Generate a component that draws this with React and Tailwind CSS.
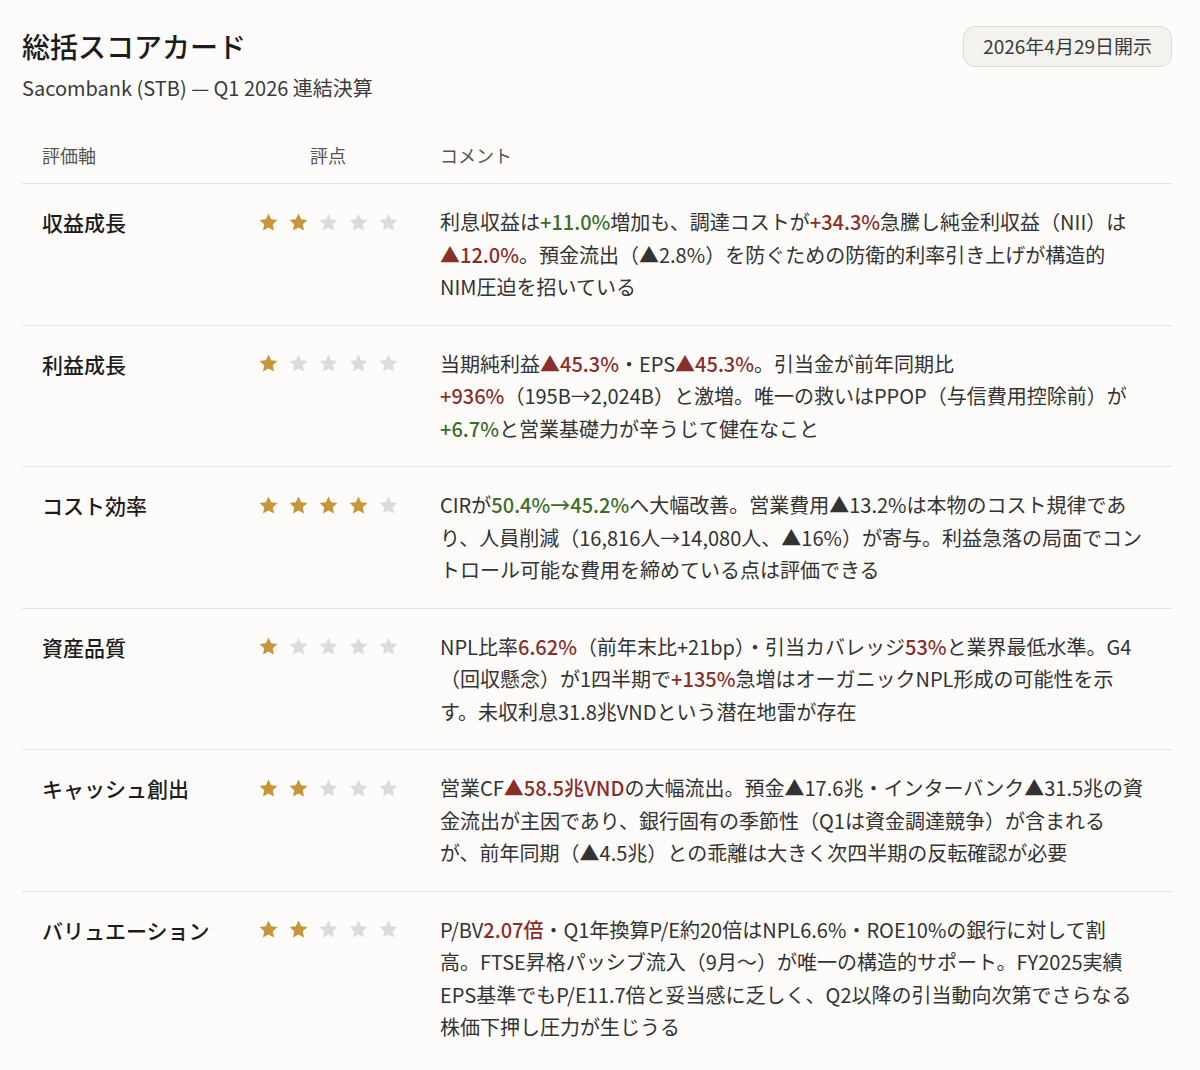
import React from "react";

const G = ({ children }) => <span className="text-[#3b6e2a] font-medium">{children}</span>;
const R = ({ children }) => <span className="text-[#8a2e2a] font-medium">{children}</span>;

function Star({ on }) {
  return (
    <svg width="21" height="21" viewBox="0 0 24 24" className="block">
      <path
        d="M12 1.8l3.05 6.55 7.15.85-5.3 4.9 1.42 7.08L12 17.6l-6.32 3.58 1.42-7.08-5.3-4.9 7.15-.85z"
        fill={on ? "#c8963a" : "#dcdcdc"}
      />
    </svg>
  );
}

function Stars({ n }) {
  return (
    <div className="flex items-center justify-center gap-[9px] h-[32.5px]">
      {[0, 1, 2, 3, 4].map((i) => (
        <Star key={i} on={i < n} />
      ))}
    </div>
  );
}

const rows = [
  {
    label: "収益成長",
    n: 2,
    body: (
      <>
        利息収益は<G>+11.0%</G>増加も、調達コストが<R>+34.3%</R>急騰し純金利収益（NII）は<br />
        <R>▲12.0%</R>。預金流出（▲2.8%）を防ぐための防衛的利率引き上げが構造的<br />
        NIM圧迫を招いている
      </>
    ),
  },
  {
    label: "利益成長",
    n: 1,
    body: (
      <>
        当期純利益<R>▲45.3%</R>・EPS<R>▲45.3%</R>。引当金が前年同期比<br />
        <R>+936%</R>（195B→2,024B）と激増。唯一の救いはPPOP（与信費用控除前）が<br />
        <G>+6.7%</G>と営業基礎力が辛うじて健在なこと
      </>
    ),
  },
  {
    label: "コスト効率",
    n: 4,
    body: (
      <>
        CIRが<G>50.4%→45.2%</G>へ大幅改善。営業費用▲13.2%は本物のコスト規律であ<br />
        り、人員削減（16,816人→14,080人、▲16%）が寄与。利益急落の局面でコン<br />
        トロール可能な費用を締めている点は評価できる
      </>
    ),
  },
  {
    label: "資産品質",
    n: 1,
    body: (
      <>
        NPL比率<R>6.62%</R>（前年末比+21bp）・引当カバレッジ<R>53%</R>と業界最低水準。G4<br />
        （回収懸念）が1四半期で<R>+135%</R>急増はオーガニックNPL形成の可能性を示<br />
        す。未収利息31.8兆VNDという潜在地雷が存在
      </>
    ),
  },
  {
    label: "キャッシュ創出",
    n: 2,
    body: (
      <>
        営業CF<R>▲58.5兆VND</R>の大幅流出。預金▲17.6兆・インターバンク▲31.5兆の資<br />
        金流出が主因であり、銀行固有の季節性（Q1は資金調達競争）が含まれる<br />
        が、前年同期（▲4.5兆）との乖離は大きく次四半期の反転確認が必要
      </>
    ),
  },
  {
    label: "バリュエーション",
    n: 2,
    body: (
      <>
        P/BV<R>2.07倍</R>・Q1年換算P/E約20倍はNPL6.6%・ROE10%の銀行に対して割<br />
        高。FTSE昇格パッシブ流入（9月〜）が唯一の構造的サポート。FY2025実績<br />
        EPS基準でもP/E11.7倍と妥当感に乏しく、Q2以降の引当動向次第でさらなる<br />
        株価下押し圧力が生じうる
      </>
    ),
  },
];

export default function App() {
  return (
    <div
      className="min-h-[1070px] bg-[#fdfcfa] pl-[22px] pr-[28px] pt-[26px] text-[#2e2e2e]"
      style={{ fontFamily: '"Noto Sans CJK JP", "Noto Sans", sans-serif' }}
    >
      <div className="flex items-start justify-between">
        <div>
          <h1 className="text-[28px] leading-[40px] font-medium text-[#1c1c1c]">総括スコアカード</h1>
          <p className="mt-[8px] text-[20px] leading-[28px] text-[#3a3a3a]">
            Sacombank (STB) — Q1 2026 連結決算
          </p>
        </div>
        <div className="h-[41px] px-[19px] flex items-center rounded-[12px] border border-[#dedbd5] bg-[#f3f2ee] text-[19px] text-[#3a3a3a]">
          2026年4月29日開示
        </div>
      </div>

      <div className="mt-[26px]">
        <div className="grid grid-cols-[214px_184px_1fr] border-b border-[#e6e4e0] text-[18px] leading-[27px] text-[#555]">
          <div className="pl-[20px] py-[14px]">評価軸</div>
          <div className="py-[14px] text-center">評点</div>
          <div className="pl-[20px] py-[14px]">コメント</div>
        </div>
        {rows.map((r, i) => (
          <div
            key={i}
            className={
              "grid grid-cols-[214px_184px_1fr] pt-[22px] pb-[21px] " +
              (i < rows.length - 1 ? "border-b border-[#e6e4e0]" : "")
            }
          >
            <div className="pl-[20px] text-[21px] leading-[32.5px] font-medium text-[#1c1c1c]">{r.label}</div>
            <div>
              <Stars n={r.n} />
            </div>
            <div className="pl-[20px] pr-[10px] text-[20px] leading-[32.5px] text-[#333] whitespace-nowrap">
              {r.body}
            </div>
          </div>
        ))}
      </div>
    </div>
  );
}
